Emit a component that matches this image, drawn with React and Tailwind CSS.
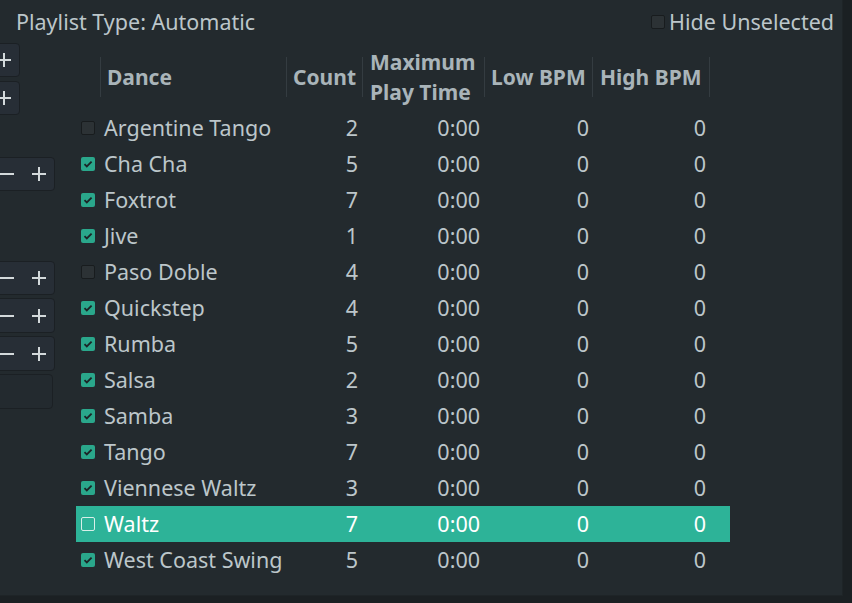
import React from 'react';

// Dance list for the automatic playlist
const dances = [
  { name: "Argentine Tango", count: 2, on: false },
  { name: "Cha Cha", count: 5, on: true },
  { name: "Foxtrot", count: 7, on: true },
  { name: "Jive", count: 1, on: true },
  { name: "Paso Doble", count: 4, on: false },
  { name: "Quickstep", count: 4, on: true },
  { name: "Rumba", count: 5, on: true },
  { name: "Salsa", count: 2, on: true },
  { name: "Samba", count: 3, on: true },
  { name: "Tango", count: 7, on: true },
  { name: "Viennese Waltz", count: 3, on: true },
  { name: "Waltz", count: 7, on: false, selected: true },
  { name: "West Coast Swing", count: 5, on: true },
];

const Plus = () => (
  <svg width="14" height="14" viewBox="0 0 14 14">
    <path d="M7 0v14M0 7h14" stroke="#d3d9db" strokeWidth="2" />
  </svg>
);

const Minus = () => (
  <svg width="14" height="14" viewBox="0 0 14 14">
    <path d="M0 7h14" stroke="#d3d9db" strokeWidth="2" />
  </svg>
);

const Check = ({ on, selected }) => {
  if (selected) {
    return <div className="w-[14px] h-[14px] rounded-[2px] border border-[#d8efe9]"></div>;
  }
  if (!on) {
    return <div className="w-[14px] h-[14px] rounded-[2px] bg-[#2c3235] border border-[#181c1e]"></div>;
  }
  return (
    <div className="w-[14px] h-[14px] rounded-[2px] bg-[#2aa78b] flex items-center justify-center">
      <svg width="10" height="10" viewBox="0 0 10 10">
        <path d="M1.5 5.2l2.3 2.3L8.6 2.6" stroke="#1c2426" strokeWidth="1.8" fill="none" />
      </svg>
    </div>
  );
};

const SpinButtons = ({ className = "" }) => (
  <div className={`w-[80px] h-[34px] -ml-[25px] shrink-0 rounded-[4px] bg-[#272e36] border border-[#1b2024] flex items-center ${className}`}>
    <div className="ml-[24px]"><Minus /></div>
    <div className="ml-[18px]"><Plus /></div>
  </div>
);

const HeaderCell = ({ children, last }) => (
  <div className="flex items-center h-full">
    <div className="w-px h-[40px] bg-[#343c41] shrink-0"></div>
    {!last && <div className="pl-[6px] font-bold text-[#a9b4b9] leading-[30px] text-[21px]">{children}</div>}
  </div>
);

export default function App() {
  return (
    <div className="w-[852px] h-[603px] bg-[#1b2023] overflow-hidden" style={{ fontFamily: '"Noto Sans", sans-serif' }}>
      <div className="w-[843px] h-[596px] bg-[#232a2e] border-r border-b border-[#1e2427] flex flex-col text-[21.5px] text-[#bcc6ca]">
        {/* Top bar */}
        <div className="h-[43px] flex items-center justify-between pl-[16px] pr-[8px] shrink-0">
          <span className="mt-[1px]">Playlist Type: Automatic</span>
          <div className="flex items-center gap-[4px] mt-[1px]">
            <Check on={false} />
            <span>Hide Unselected</span>
          </div>
        </div>

        <div className="flex flex-1">
          {/* Left controls (clipped) */}
          <div className="w-[76px] shrink-0 overflow-hidden flex flex-col">
            <div className="w-[40px] h-[34px] -ml-[20px] rounded-[4px] bg-[#272e36] border border-[#1b2024] flex items-center justify-end pr-[8px]"><Plus /></div>
            <div className="w-[40px] h-[34px] mt-[4px] -ml-[20px] rounded-[4px] bg-[#272e36] border border-[#1b2024] flex items-center justify-end pr-[8px]"><Plus /></div>
            <SpinButtons className="mt-[42px]" />
            <SpinButtons className="mt-[70px]" />
            <SpinButtons className="mt-[3px] h-[35px]" />
            <SpinButtons className="mt-[3px] h-[35px]" />
            <div className="w-[78px] h-[35px] mt-[3px] -ml-[25px] rounded-[4px] bg-[#232a2f] border border-[#1b2024]"></div>
          </div>

          {/* Table */}
          <div className="flex flex-col">
            <div className="grid grid-cols-[24px_186px_76px_122px_108px_117px_21px] h-[60px] mt-[4px] mb-[3px]">
              <div></div>
              <HeaderCell>Dance</HeaderCell>
              <HeaderCell>Count</HeaderCell>
              <HeaderCell><span className="block pl-[1px]">Maximum<br />Play Time</span></HeaderCell>
              <HeaderCell>Low BPM</HeaderCell>
              <HeaderCell><span className="pl-[1px]">High BPM</span></HeaderCell>
              <HeaderCell last />
            </div>
            {dances.map((d) => (
              <div
                key={d.name}
                className={`grid grid-cols-[24px_186px_76px_122px_108px_117px_21px] h-[36px] items-center ${d.selected ? "bg-[#2db398] text-white" : ""}`}
              >
                <div className="pl-[5px] flex items-center"><Check on={d.on} selected={d.selected} /></div>
                <div className="pl-[4px] whitespace-nowrap pt-[1px]">{d.name}</div>
                <div className="text-right pr-[4px] pt-[1px]">{d.count}</div>
                <div className="text-right pr-[4px] pt-[1px]">0:00</div>
                <div className="text-right pr-[3px] pt-[1px]">0</div>
                <div className="text-right pr-[3px] pt-[1px]">0</div>
                <div></div>
              </div>
            ))}
          </div>
        </div>
      </div>
    </div>
  );
}
